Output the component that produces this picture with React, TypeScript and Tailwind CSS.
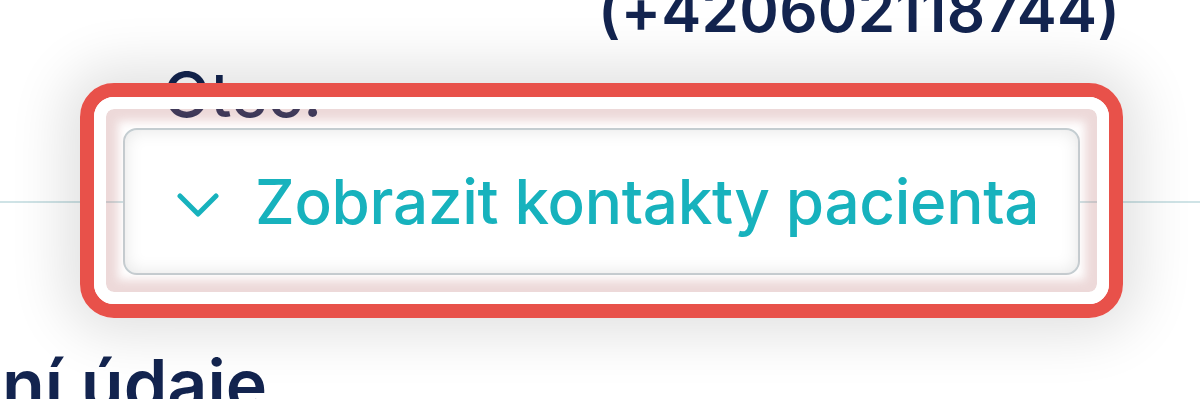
// Detail karty pacienta — rozbalovací tlačítko kontaktů (zvýrazněno anotací)

export default function App() {
  return (
    <div className="relative w-[1200px] h-[399px] overflow-hidden bg-white font-['Inter',sans-serif]">
      <p className="-mt-[20px] pl-[598px] text-[60px] leading-none font-semibold text-[#13244f] whitespace-nowrap tracking-[0.3px]">
        (+420602118744)
      </p>

      <p className="mt-[24px] pl-[163px] text-[62px] leading-none font-medium text-[#13244f]">Otec:</p>

      <div className="mt-[2px] flex items-center">
        <div className="h-[2px] w-[123px] bg-[#cfe3e6]" />
        <button
          type="button"
          className="h-[147px] w-[957px] rounded-[14px] border-2 border-[#c5ced2] bg-white shadow-[inset_0_0_18px_rgba(0,0,0,0.1)] flex items-center pl-[52px] gap-[36px] text-[#17b2bd]"
        >
          <svg width="42" height="26" viewBox="0 0 42 26" fill="none" className="mt-[6px]">
            <polyline points="3,4 21,22 39,4" stroke="currentColor" strokeWidth="5" strokeLinecap="round" strokeLinejoin="round" />
          </svg>
          <span className="text-[62px] leading-none font-medium tracking-[-0.3px] whitespace-nowrap">
            Zobrazit kontakty pacienta
          </span>
        </button>
        <div className="h-[2px] flex-1 bg-[#cfe3e6]" />
      </div>

      <h2 className="mt-[75px] ml-[2px] text-[70px] leading-none font-semibold text-[#13244f] whitespace-nowrap">
        ní údaje
      </h2>

      {/* anotace */}
      <div className="absolute left-[80px] top-[83px] w-[1043px] h-[235px] rounded-[34px] border-[14px] border-[#e8514a] shadow-[0_0_55px_16px_rgba(0,0,0,0.12)]">
        <div className="h-full w-full rounded-[20px] border-[12px] border-white shadow-[inset_0_0_10px_12px_rgba(190,120,120,0.28)]" />
      </div>
    </div>
  )
}
